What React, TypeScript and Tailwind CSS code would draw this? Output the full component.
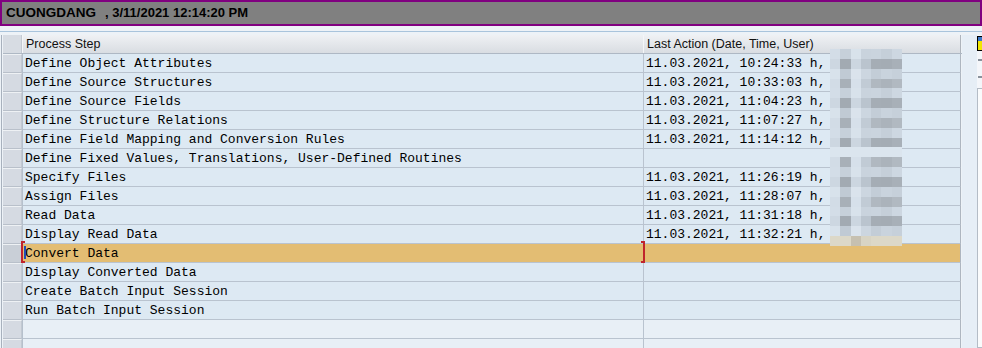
import React from "react";

type Row = { step: string; action: string };

const rows: Row[] = [
  { step: "Define Object Attributes", action: "11.03.2021, 10:24:33 h," },
  { step: "Define Source Structures", action: "11.03.2021, 10:33:03 h," },
  { step: "Define Source Fields", action: "11.03.2021, 11:04:23 h," },
  { step: "Define Structure Relations", action: "11.03.2021, 11:07:27 h," },
  { step: "Define Field Mapping and Conversion Rules", action: "11.03.2021, 11:14:12 h," },
  { step: "Define Fixed Values, Translations, User-Defined Routines", action: "" },
  { step: "Specify Files", action: "11.03.2021, 11:26:19 h," },
  { step: "Assign Files", action: "11.03.2021, 11:28:07 h," },
  { step: "Read Data", action: "11.03.2021, 11:31:18 h," },
  { step: "Display Read Data", action: "11.03.2021, 11:32:21 h," },
  { step: "Convert Data", action: "" },
  { step: "Display Converted Data", action: "" },
  { step: "Create Batch Input Session", action: "" },
  { step: "Run Batch Input Session", action: "" },
  { step: "", action: "" },
  { step: "", action: "" },
];

const SELECTED = 10;

// pixelated blur over the user names
const light = ["#d3dde7", "#c6d0da", "#d8e2eb", "#c9d3dd", "#cad4de", "#c5cfd9", "#cdd7e1"];
const light2 = ["#d8e2eb", "#c0cad4", "#dae3ec", "#ccd6e0", "#c3cdd7", "#c9d3dd", "#c6d0da"];
const dark = ["#cdd7e1", "#a2aab2", "#ccd6e0", "#bac4ce", "#a5adb5", "#a4acb4", "#a8b0b8"];
const dark2 = ["#d2dce6", "#a8b0b8", "#d6e0ea", "#c1cbd5", "#b0b8c0", "#abb3bb", "#b1b9c1"];

function Blur() {
  const bands: string[][] = [];
  for (let i = 0; i < 20; i++) {
    if (i === 19) bands.push(["#dcd8c8", "#dcd8c8", "#c6c0b0", "#d8d4c4", "#dcd8c8", "#dcd8c8", "#dcd8c8"]);
    else if (i === 10) bands.push(["#dbe5ee", "#dbe5ee", "#dbe5ee", "#dbe5ee", "#dbe5ee", "#dbe5ee", "#dbe5ee"]);
    else if (i % 2 === 1) bands.push(i % 4 === 1 ? dark : dark2);
    else bands.push(i % 4 === 0 ? light : light2);
  }
  return (
    <div className="absolute left-[830px] top-[49px] flex flex-col">
      {bands.map((b, i) => (
        <div key={i} className="flex h-[9.85px]">
          {b.map((c, j) => (
            <div key={j} className="h-full w-[10.3px]" style={{ backgroundColor: c }} />
          ))}
        </div>
      ))}
    </div>
  );
}

export default function App() {
  return (
    <div className="relative h-[348px] w-[982px] overflow-hidden bg-[#edf2f7]">
      {/* title bar */}
      <div className="flex h-[26px] items-center border-2 border-[#800080] bg-[#808080] pl-[4px] font-['Liberation_Sans',Arial,sans-serif] text-[13px] font-bold text-black">
        <span className="text-[13.5px]">CUONGDANG</span>
        <span className="ml-[9px]">, 3/11/2021 12:14:20 PM</span>
      </div>
      <div className="h-[5px]" />
      <div className="h-px bg-[#a9c4dc]" />
      <div className="h-[3px]" />

      <div className="flex">
        {/* table */}
        <div className="ml-[1px] flex w-[961px] flex-col border-l border-[#a8b1bd] pl-[1px]">
          {/* header */}
          <div className="flex h-[19px] border-b border-[#aeb8c4]">
            <div className="w-[19px] border-r border-[#c4cad2] bg-[#d7dce3]" />
            <div className="w-[1px] bg-[#f4f6f8]" />
            <div className="flex w-[621px] items-center border-r border-[#f4f6f8] bg-gradient-to-b from-[#eff1f4] to-[#d9dde2] pl-[3px] font-['Liberation_Sans',Arial,sans-serif] text-[12.5px] text-[#111]">
              Process Step
            </div>
            <div className="flex w-[317px] items-center border-r border-[#aeb4bc] bg-gradient-to-b from-[#eff1f4] to-[#d9dde2] pl-[3px] font-['Liberation_Sans',Arial,sans-serif] text-[12.5px] text-[#111]">
              Last Action (Date, Time, User)
            </div>
          </div>

          {rows.map((r, i) => {
            const sel = i === SELECTED;
            const filled = i < 14;
            const bg = sel ? "bg-[#e3bd73]" : filled ? "bg-[#dde9f3]" : "bg-[#e8eff6]";
            return (
              <div key={i} className="flex h-[19px]">
                <div
                  className={
                    "w-[19px] border-b border-r border-t border-b-[#b9c0ca] border-r-[#c2c9d2] border-t-[#eef1f4] " +
                    (sel ? "bg-[#c9cfd7]" : "bg-[#d5dae2]")
                  }
                />
                <div className="w-[1px] bg-[#b6c0cc]" />
                <div
                  className={
                    "relative flex w-[621px] items-center whitespace-pre border-b border-r border-[#b9c3cf] pl-[2px] pt-[1px] font-['Liberation_Mono','Courier_New',monospace] text-[13px] text-black " +
                    bg
                  }
                >
                  {sel && (
                    <>
                      <div className="absolute left-[-2px] top-[-3px] h-[22px] w-[4px] border-y-2 border-l-2 border-[#c0242c]" />
                      <div className="absolute left-[1px] top-[2px] h-[13px] w-[2px] bg-[#1f4fb4]" />
                    </>
                  )}
                  {r.step}
                </div>
                <div
                  className={
                    "relative flex w-[317px] items-center whitespace-pre border-b border-r border-b-[#b9c3cf] border-r-[#aeb6c0] pl-[2px] pt-[1px] font-['Liberation_Mono','Courier_New',monospace] text-[13px] text-black " +
                    bg
                  }
                >
                  {sel && (
                    <div className="absolute left-[-3px] top-[-3px] h-[22px] w-[4px] border-y-2 border-r-2 border-[#c0242c]" />
                  )}
                  {r.action}
                </div>
              </div>
            );
          })}
        </div>

        {/* right strip */}
        <div className="flex w-[15px] bg-[#e6eef6]" />
        <div className="flex w-[5px] flex-col items-start bg-[#f4f6fa] pt-[1px]">
          <div className="h-[15px] w-[8px] border border-black bg-[#f2e600]">
            <div className="h-[4px] bg-[#3a78c8]" />
          </div>
          <div className="mt-[8px] ml-[1px] h-[2px] w-[4px] bg-[#8a929c]" />
          <div className="mt-[15px] ml-[1px] h-[2px] w-[4px] bg-[#8a929c]" />
          <div className="mt-[10px] h-[260px] w-[8px] border border-[#b4bcc6] bg-[#fafbfc]" />
        </div>
      </div>

      <Blur />
    </div>
  );
}
